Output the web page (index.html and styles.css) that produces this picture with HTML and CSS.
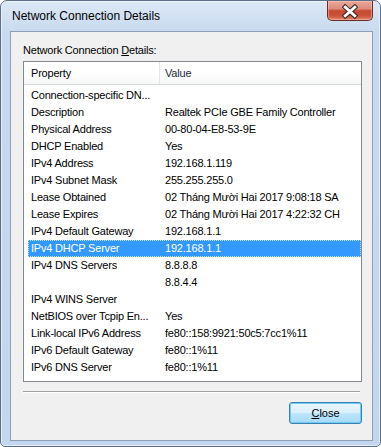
FILE: index.html
```html
<!DOCTYPE html>
<html lang="en">
<head>
  <meta charset="UTF-8" />
  <meta name="viewport" content="width=device-width, initial-scale=1.0"/>
  <title>Network Connection Details</title>
  <link rel="stylesheet" href="styles.css">
</head>
<body>
  <div class="window">
    <div class="titlebar">
      <span class="title">Network Connection Details</span>
      <button class="close-x" aria-label="Close">
        <svg width="46" height="20" viewBox="0 0 46 20">
          <g stroke-linecap="square">
            <line x1="18" y1="6" x2="28" y2="15" stroke="#3b1f1a" stroke-width="5"/>
            <line x1="28" y1="6" x2="18" y2="15" stroke="#3b1f1a" stroke-width="5"/>
            <line x1="18" y1="6" x2="28" y2="15" stroke="#fff" stroke-width="3"/>
            <line x1="28" y1="6" x2="18" y2="15" stroke="#fff" stroke-width="3"/>
          </g>
        </svg>
      </button>
    </div>

    <div class="client">
      <div class="group-label">Network Connection <u>D</u>etails:</div>

      <div class="listview">
        <div class="lv-header">
          <div class="col col-prop">Property</div>
          <div class="col col-val">Value</div>
        </div>
        <div class="lv-body">
          <div class="lv-row"><span>Connection-specific DN...</span><span></span></div>
          <div class="lv-row"><span>Description</span><span>Realtek PCIe GBE Family Controller</span></div>
          <div class="lv-row"><span>Physical Address</span><span>00-80-04-E8-53-9E</span></div>
          <div class="lv-row"><span>DHCP Enabled</span><span>Yes</span></div>
          <div class="lv-row"><span>IPv4 Address</span><span>192.168.1.119</span></div>
          <div class="lv-row"><span>IPv4 Subnet Mask</span><span>255.255.255.0</span></div>
          <div class="lv-row"><span>Lease Obtained</span><span>02 Tháng Mười Hai 2017 9:08:18 SA</span></div>
          <div class="lv-row"><span>Lease Expires</span><span>02 Tháng Mười Hai 2017 4:22:32 CH</span></div>
          <div class="lv-row"><span>IPv4 Default Gateway</span><span>192.168.1.1</span></div>
          <div class="lv-row selected"><span>IPv4 DHCP Server</span><span>192.168.1.1</span></div>
          <div class="lv-row"><span>IPv4 DNS Servers</span><span>8.8.8.8</span></div>
          <div class="lv-row"><span></span><span>8.8.4.4</span></div>
          <div class="lv-row"><span>IPv4 WINS Server</span><span></span></div>
          <div class="lv-row"><span>NetBIOS over Tcpip En...</span><span>Yes</span></div>
          <div class="lv-row"><span>Link-local IPv6 Address</span><span>fe80::158:9921:50c5:7cc1%11</span></div>
          <div class="lv-row"><span>IPv6 Default Gateway</span><span>fe80::1%11</span></div>
          <div class="lv-row"><span>IPv6 DNS Server</span><span>fe80::1%11</span></div>
        </div>
      </div>

      <div class="separator"></div>

      <div class="actions">
        <button class="btn"><u>C</u>lose</button>
      </div>
    </div>
  </div>
</body>
</html>
```

FILE: styles.css
```css
body {
  margin: 0;
  background: #fff;
  font-family: "Liberation Sans", Arial, sans-serif;
  color: #000;
}

.window {
  box-sizing: border-box;
  width: 381px;
  height: 447px;
  border: 1px solid #5b6f8c;
  border-radius: 7px 7px 5px 5px;
  padding: 0 7px 5px 9px;
  background: linear-gradient(to bottom, #dce8f6, #c8daef 32px, #c2d6ee);
  box-shadow: inset 0 0 0 1px rgba(255, 255, 255, 0.55);
  display: flex;
  flex-direction: column;
}

.titlebar {
  height: 30px;
  display: flex;
  justify-content: space-between;
  align-items: flex-start;
}

.title {
  font-size: 12px;
  line-height: 30px;
  padding-left: 2px;
}

.close-x {
  width: 46px;
  height: 20px;
  padding: 0;
  border: 1px solid #6b2b22;
  border-top: none;
  border-radius: 0 0 5px 5px;
  background: linear-gradient(to bottom, #e9a99c 0%, #dc8c7b 40%, #c64a33 52%, #c9533a 78%, #de8a6f 100%);
  box-shadow: inset 0 0 0 1px rgba(255, 210, 200, 0.45);
  display: flex;
}

.client {
  flex: 1;
  background: #f0f0f0;
  border: 1px solid #8e9fb7;
  padding: 11px 10px 0 12px;
  display: flex;
  flex-direction: column;
}

.group-label {
  font-size: 11px;
  line-height: 15px;
  letter-spacing: -0.2px;
}

.listview {
  box-sizing: border-box;
  margin-top: 3px;
  height: 321px;
  background: #fff;
  border: 1px solid #828790;
  font-size: 11px;
  letter-spacing: -0.2px;
}

.lv-header {
  display: flex;
  height: 22px;
  border-bottom: 1px solid #d5d5d5;
  background: linear-gradient(to bottom, #fff 0%, #fff 45%, #f6f7f8 100%);
}

.col {
  line-height: 22px;
}

.col-prop {
  width: 128px;
  padding-left: 7px;
  border-right: 1px solid #e3e5e7;
}

.col-val {
  flex: 1;
  padding-left: 5px;
  color: #1e2b3e;
}

.lv-body {
  padding-top: 2px;
}

.lv-row {
  box-sizing: border-box;
  height: 17px;
  line-height: 17px;
  margin-left: 4px;
  padding-left: 3px;
  display: grid;
  grid-template-columns: 134px 1fr;
  white-space: nowrap;
}

.lv-row.selected {
  background: #3399ff;
  color: #fff;
  outline: 1px dotted rgba(255, 255, 255, 0.7);
  outline-offset: -1px;
}

.separator {
  margin-top: 9px;
  height: 1px;
  background: #a0a0a0;
  border-bottom: 1px solid #fff;
  margin-right: 2px;
}

.actions {
  display: flex;
  justify-content: flex-end;
  margin-top: 9px;
}

.btn {
  width: 73px;
  height: 22px;
  padding: 0;
  font-family: "Liberation Sans", Arial, sans-serif;
  font-size: 11px;
  color: #000;
  border: 1px solid #3c7fb1;
  border-radius: 3px;
  background: linear-gradient(to bottom, #eaf6fd 0%, #d9f0fc 48%, #bee6fd 52%, #a7d9f5 100%);
  box-shadow: inset 0 0 0 1px #6fcdf3;
}
```
